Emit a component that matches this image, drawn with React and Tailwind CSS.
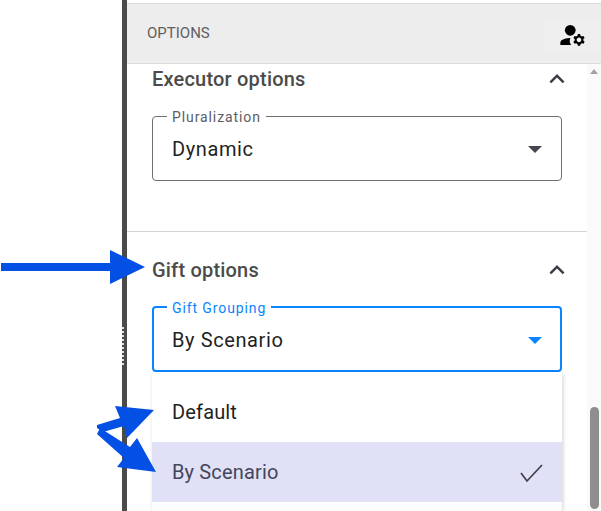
const font = { fontFamily: "Roboto, sans-serif" };

function Chevron() {
  return (
    <svg className="-mr-[10px]" width="30" height="30" viewBox="0 0 24 24" fill="#3c3c44">
      <path d="M12 8l-6 6 1.41 1.41L12 10.83l4.59 4.58L18 14z" />
    </svg>
  );
}

function Caret({ color }) {
  return (
    <svg width="14" height="7" viewBox="0 0 14 7" fill={color}>
      <path d="M0 0h14L7 7z" />
    </svg>
  );
}

function Select({ label, value, focused }) {
  return (
    <fieldset
      className={
        focused
          ? "h-[73px] rounded-[4px] border-2 border-[#0a84ff] pl-[18px] pr-[18px] flex-none"
          : "h-[73px] rounded-[4px] border border-[#6f6f76] pl-[19px] pr-[19px] flex-none"
      }
    >
      <legend
        className={
          focused
            ? "px-[5px] pt-[2px] -ml-[5px] text-[14px] leading-[14px] tracking-[0.9px] text-[#0a84ff]"
            : "px-[5px] pt-[2px] -ml-[5px] text-[14px] leading-[14px] tracking-[0.9px] text-[#5c5c64]"
        }
      >
        {label}
      </legend>
      <div className="flex items-center justify-between h-[50px]">
        <span className="text-[20px] tracking-[0.6px] text-[#1f1f24]">{value}</span>
        <Caret color={focused ? "#0a84ff" : "#45454d"} />
      </div>
    </fieldset>
  );
}

export default function App() {
  return (
    <div className="relative w-[601px] h-[511px] flex overflow-hidden bg-white" style={font}>
      {/* left blank area */}
      <div className="w-[122px] flex-none" />
      <div className="relative w-[5px] flex-none bg-[#4a4a4a]">
        <div className="absolute left-0 top-[327px] h-[38px] w-[2px] border-l-2 border-dotted border-[#e0e0e0]" />
      </div>

      <div className="flex-1 flex flex-col min-w-0">
        <div className="h-[3px] flex-none bg-white" />
        <div className="h-[61px] flex-none flex items-center justify-between bg-[#ededed] border-t border-b border-[#dcdcdc] pl-[20px]">
          <span className="text-[15px] text-[#5f5f5f]">OPTIONS</span>
          <div className="w-[56px] h-[32px] flex items-center justify-start pl-[13px] bg-[#efefef]">
            <svg className="flex-none" width="28" height="28" viewBox="0 0 24 24" fill="#000">
              <circle cx="10.5" cy="8.8" r="4.6" />
              <path transform="translate(0 1.4)" d="M10.67 14.02C10.45 14.01 10.23 14 10 14c-2.42 0-4.68.67-6.61 1.82-.88.52-1.39 1.5-1.39 2.53V20h9.26A6.95 6.95 0 0 1 10 17c0-1.03.23-2.07.67-2.98z" />
              <path d="M21.75 17c0-.22-.03-.42-.06-.63l1.14-1.01-1-1.73-1.45.49c-.32-.27-.68-.48-1.08-.63L19 12h-2l-.3 1.49c-.4.15-.76.36-1.08.63l-1.45-.49-1 1.73 1.14 1.01c-.03.21-.06.41-.06.63s.03.42.06.63l-1.14 1.01 1 1.73 1.45-.49c.32.27.68.48 1.08.63L17 22h2l.3-1.49c.4-.15.76-.36 1.08-.63l1.45.49 1-1.73-1.14-1.01c.03-.21.06-.41.06-.63zM18 19c-1.1 0-2-.9-2-2s.9-2 2-2 2 .9 2 2-.9 2-2 2z" />
            </svg>
          </div>
        </div>

        <div className="flex-1 flex min-h-0">
          <div className="flex-1 min-w-0 flex flex-col overflow-hidden">
            {/* executor options */}
            <div className="h-[168px] flex-none flex flex-col px-[25px] border-b border-[#d4d4d4]">
              <div className="h-[30px] flex-none flex items-center justify-between">
                <span className="text-[20px] font-medium tracking-[0.2px] text-[#4b4b4b]">Executor options</span>
                <Chevron />
              </div>
              <div className="h-[14px] flex-none" />
              <Select label="Pluralization" value="Dynamic" />
            </div>

            {/* gift options */}
            <div className="flex-none flex flex-col px-[25px] pt-[23px]">
              <div className="h-[30px] flex-none flex items-center justify-between">
                <span className="text-[20px] font-medium tracking-[0.2px] text-[#4b4b4b]">Gift options</span>
                <Chevron />
              </div>
              <div className="h-[14px] flex-none" />
              <Select label="Gift Grouping" value="By Scenario" focused />
              <div className="flex-none flex flex-col bg-white rounded-b-[4px] pt-[10px] pb-[10px] shadow-[1px_2px_4px_rgba(0,0,0,0.18)] text-[20px] tracking-[0.15px]">
                <div className="h-[60px] flex items-center px-[20px] text-[#1f1f24]">Default</div>
                <div className="h-[60px] flex items-center justify-between pl-[20px] pr-[18px] bg-[#e0e0f6] text-[#45455a]">
                  By Scenario
                  <svg width="24" height="24" viewBox="0 0 24 24" fill="none" stroke="#3f3f4a" strokeWidth="1.7">
                    <path d="M1 13l6 8L22 5" />
                  </svg>
                </div>
              </div>
            </div>
          </div>

          {/* scrollbar */}
          <div className="relative w-[14px] flex-none bg-[#fafafa]">
            <div className="absolute left-[3px] top-[5px] w-0 h-0 border-x-[4px] border-b-[5px] border-x-transparent border-b-[#a3a3a3]" />
            <div className="absolute left-[3px] top-[343px] w-[9px] h-[102px] rounded-full bg-[#8e8e8e]" />
          </div>
        </div>
      </div>

      {/* annotation arrows */}
      <svg className="absolute left-0 top-0 pointer-events-none" width="601" height="511" viewBox="0 0 601 511" fill="#0450e4">
        <path d="M1 263h109v-13l35 17-35 17v-13H1z" />
        <path d="M97 425L120 418 115 406 154 410 127 438 124 426 103 432 97 428z" />
        <path d="M97 434L100 428 130 447 137 438 156 472 117 467 124 458z" />
      </svg>
    </div>
  );
}
